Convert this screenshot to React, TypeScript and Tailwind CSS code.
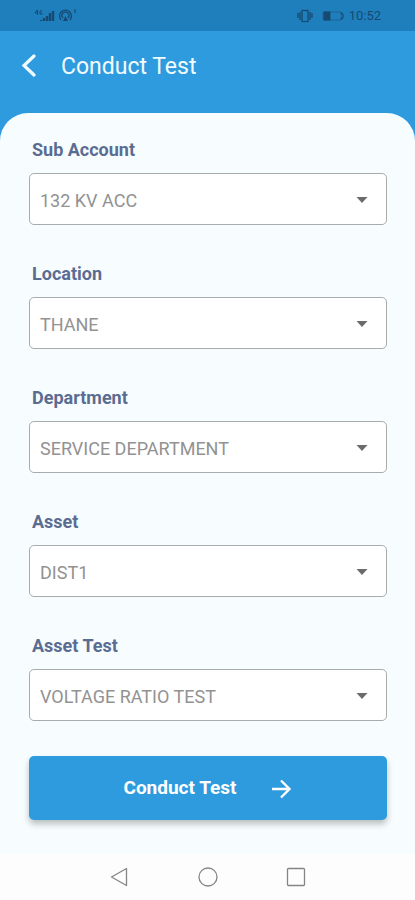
import { useState } from "react";

const fields = [
  { id: "sub-account", label: "Sub Account", options: ["132 KV ACC"] },
  { id: "location", label: "Location", options: ["THANE"] },
  { id: "department", label: "Department", options: ["SERVICE DEPARTMENT"] },
  { id: "asset", label: "Asset", options: ["DIST1"] },
  { id: "asset-test", label: "Asset Test", options: ["VOLTAGE RATIO TEST"] },
];

type FieldProps = { id: string; label: string; options: string[] };

function SelectField({ id, label, options }: FieldProps) {
  const [value, setValue] = useState(options[0]);
  return (
    <div className="flex flex-col gap-[13px]">
      <label htmlFor={id} className="pl-[3px] text-lg leading-5 font-bold text-[#5b6c92]">
        {label}
      </label>
      <div className="grid items-center">
        <select
          id={id}
          value={value}
          onChange={(e) => setValue(e.target.value)}
          className="col-start-1 row-start-1 h-[52px] w-full appearance-none rounded-[5px] border border-[#a9abad] bg-white px-[10px] pt-[3px] text-lg text-[#929292]"
        >
          {options.map((o) => (
            <option key={o}>{o}</option>
          ))}
        </select>
        <svg
          viewBox="0 0 12 8"
          className="pointer-events-none col-start-1 row-start-1 mr-[19px] h-2 w-3 justify-self-end"
          fill="#6b6b6b"
        >
          <path d="M0.500 2h11L6 8z" />
        </svg>
      </div>
    </div>
  );
}

function StatusBar() {
  return (
    <div className="flex h-[31px] items-center justify-between bg-[#1f7fbd] pr-[34px] pl-[34px] text-[#164a72]">
      <svg viewBox="0 0 44 16" className="h-4 w-11" fill="none" stroke="currentColor">
        <path d="M3 2L1 5h3M3.500 2v5M8 3H6v3h2V5" strokeWidth="1" />
        <path d="M7 13v-1M10 13v-3M13 13V8M16 13V5M19 13V3" strokeWidth="2.400" />
        <path d="M27 12a6 6 0 1 1 9 0M29 10a3.500 3.500 0 1 1 5 0" strokeWidth="1.300" />
        <path d="M31.500 8l-2.500 5h5z" fill="currentColor" stroke="none" />
        <path d="M41 1v4" strokeWidth="1.200" />
      </svg>
      <div className="flex items-center gap-1">
        <svg viewBox="0 0 16 14" className="h-[14px] w-4" fill="none" stroke="currentColor" strokeWidth="1.300">
          <rect x="5" y="1.500" width="6" height="11" />
          <path d="M3 3v8M1 4v5M13 3v8M15 4v5" />
        </svg>
        <svg viewBox="0 0 24 12" className="ml-1 h-3 w-6" fill="none" stroke="currentColor">
          <rect x="2" y="2" width="18" height="8" rx="1" strokeOpacity="0.500" />
          <rect x="3" y="2" width="6" height="8" fill="currentColor" />
          <path d="M20 2.500l2 2v3l-2 2" strokeWidth="1.200" />
        </svg>
        <span className="text-[13px]">10:52</span>
      </div>
    </div>
  );
}

function NavBar() {
  return (
    <nav className="flex h-[46px] items-center justify-center gap-16 bg-[#fdfdfd] text-[#858585]">
      <button type="button" aria-label="Back">
        <svg viewBox="0 0 24 24" className="size-6" fill="none" stroke="currentColor" strokeWidth="1.300" strokeLinejoin="round">
          <path d="M18.500 3.500v17L3.500 12z" />
        </svg>
      </button>
      <button type="button" aria-label="Home">
        <svg viewBox="0 0 24 24" className="size-6" fill="none" stroke="currentColor" strokeWidth="1.300">
          <circle cx="12" cy="12" r="9" />
        </svg>
      </button>
      <button type="button" aria-label="Recent apps">
        <svg viewBox="0 0 24 24" className="size-6" fill="none" stroke="currentColor" strokeWidth="1.300">
          <rect x="3.500" y="3.500" width="17" height="17" rx="1" />
        </svg>
      </button>
    </nav>
  );
}

export default function App() {
  return (
    <div className="flex min-h-screen flex-col bg-[#2e9bde] font-['Roboto',sans-serif]">
      <StatusBar />
      <header className="flex h-[82px] items-start gap-[21px] px-5 pt-5 text-[#f2fbff]">
        <button type="button" aria-label="Go back" className="mt-[3px]">
          <svg viewBox="0 0 20 24" className="h-6 w-5" fill="none" stroke="currentColor" strokeWidth="3.200" strokeLinecap="round">
            <path d="M14 2L4 11.500 14 21" />
          </svg>
        </button>
        <h1 className="text-[23px] leading-8">Conduct Test</h1>
      </header>
      <main className="flex flex-1 flex-col rounded-t-[28px] bg-[#f7fdfe] pt-[27px] pr-7 pl-[29px]">
        <form className="flex flex-col" onSubmit={(e) => e.preventDefault()}>
          <div className="flex flex-col gap-[39px]">
            {fields.map((f) => (
              <SelectField key={f.id} {...f} />
            ))}
          </div>
          <button
            type="submit"
            className="mt-[35px] flex h-16 items-center justify-center gap-8 rounded-[5px] bg-[#2e9bde] pt-px text-[19px] font-bold text-white shadow-[0_4px_6px_rgba(0,0,0,0.25)]"
          >
            Conduct Test
            <svg viewBox="0 0 24 24" className="size-6" fill="none" stroke="currentColor" strokeWidth="2.400">
              <path d="M3 12h17M12 3.500L20.500 12 12 20.500" />
            </svg>
          </button>
        </form>
      </main>
      <NavBar />
    </div>
  );
}
